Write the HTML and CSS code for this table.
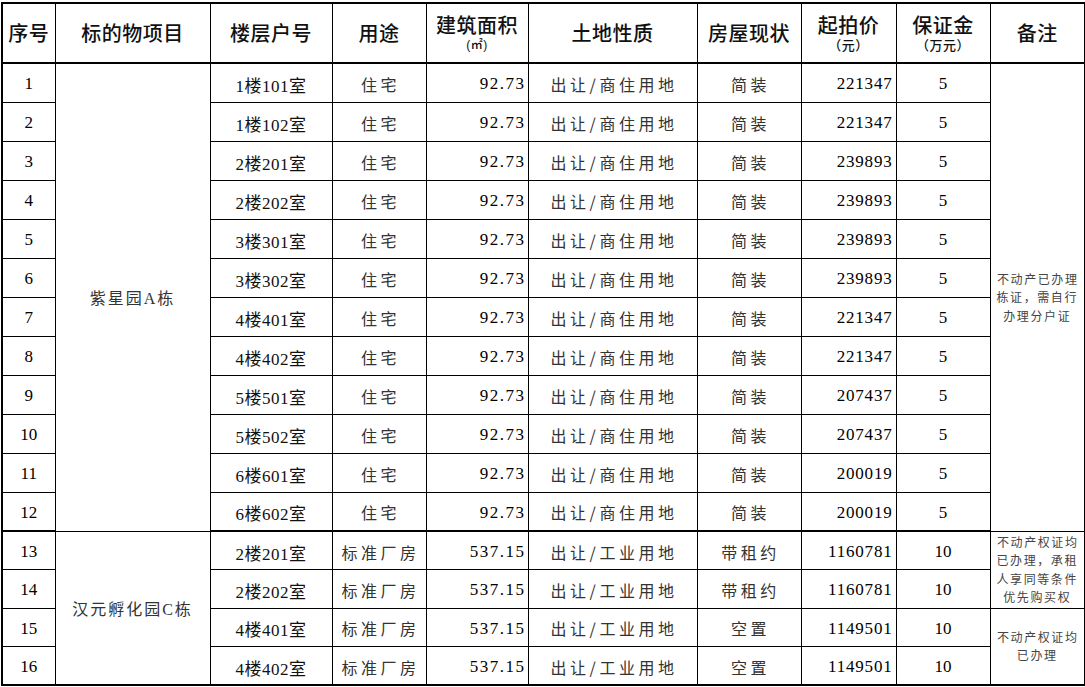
FILE: index.html
```html
<!DOCTYPE html>
<html lang="zh-CN">
<head>
<meta charset="utf-8">
<link rel="stylesheet" href="styles.css">
</head>
<body>
<table class="grid">
  <colgroup>
    <col class="c1"><col class="c2"><col class="c3"><col class="c4"><col class="c5">
    <col class="c6"><col class="c7"><col class="c8"><col class="c9"><col class="c10">
  </colgroup>
  <thead>
    <tr class="head">
      <th>序号</th>
      <th>标的物项目</th>
      <th>楼层户号</th>
      <th>用途</th>
      <th><span class="main">建筑面积</span><span class="sub sub-m">(㎡)</span></th>
      <th>土地性质</th>
      <th>房屋现状</th>
      <th><span class="main">起拍价</span><span class="sub">（元）</span></th>
      <th><span class="main">保证金</span><span class="sub">（万元）</span></th>
      <th>备注</th>
    </tr>
  </thead>
  <tbody>
    <tr><td class="num">1</td><td class="proj" rowspan="12">紫星园A栋</td><td class="room">1楼101室</td><td class="cjk">住宅</td><td class="area">92.73</td><td class="cjk">出让/商住用地</td><td class="cjk">简装</td><td class="price">221347</td><td class="num">5</td><td class="note" rowspan="12">不动产已办理<br>栋证，需自行<br>办理分户证</td></tr>
    <tr><td class="num">2</td><td class="room">1楼102室</td><td class="cjk">住宅</td><td class="area">92.73</td><td class="cjk">出让/商住用地</td><td class="cjk">简装</td><td class="price">221347</td><td class="num">5</td></tr>
    <tr><td class="num">3</td><td class="room">2楼201室</td><td class="cjk">住宅</td><td class="area">92.73</td><td class="cjk">出让/商住用地</td><td class="cjk">简装</td><td class="price">239893</td><td class="num">5</td></tr>
    <tr><td class="num">4</td><td class="room">2楼202室</td><td class="cjk">住宅</td><td class="area">92.73</td><td class="cjk">出让/商住用地</td><td class="cjk">简装</td><td class="price">239893</td><td class="num">5</td></tr>
    <tr><td class="num">5</td><td class="room">3楼301室</td><td class="cjk">住宅</td><td class="area">92.73</td><td class="cjk">出让/商住用地</td><td class="cjk">简装</td><td class="price">239893</td><td class="num">5</td></tr>
    <tr><td class="num">6</td><td class="room">3楼302室</td><td class="cjk">住宅</td><td class="area">92.73</td><td class="cjk">出让/商住用地</td><td class="cjk">简装</td><td class="price">239893</td><td class="num">5</td></tr>
    <tr><td class="num">7</td><td class="room">4楼401室</td><td class="cjk">住宅</td><td class="area">92.73</td><td class="cjk">出让/商住用地</td><td class="cjk">简装</td><td class="price">221347</td><td class="num">5</td></tr>
    <tr><td class="num">8</td><td class="room">4楼402室</td><td class="cjk">住宅</td><td class="area">92.73</td><td class="cjk">出让/商住用地</td><td class="cjk">简装</td><td class="price">221347</td><td class="num">5</td></tr>
    <tr><td class="num">9</td><td class="room">5楼501室</td><td class="cjk">住宅</td><td class="area">92.73</td><td class="cjk">出让/商住用地</td><td class="cjk">简装</td><td class="price">207437</td><td class="num">5</td></tr>
    <tr><td class="num">10</td><td class="room">5楼502室</td><td class="cjk">住宅</td><td class="area">92.73</td><td class="cjk">出让/商住用地</td><td class="cjk">简装</td><td class="price">207437</td><td class="num">5</td></tr>
    <tr><td class="num">11</td><td class="room">6楼601室</td><td class="cjk">住宅</td><td class="area">92.73</td><td class="cjk">出让/商住用地</td><td class="cjk">简装</td><td class="price">200019</td><td class="num">5</td></tr>
    <tr class="group-end"><td class="num">12</td><td class="room">6楼602室</td><td class="cjk">住宅</td><td class="area">92.73</td><td class="cjk">出让/商住用地</td><td class="cjk">简装</td><td class="price">200019</td><td class="num">5</td></tr>
    <tr class="r2"><td class="num">13</td><td class="proj" rowspan="4">汉元孵化园C栋</td><td class="room">2楼201室</td><td class="cjk">标准厂房</td><td class="area">537.15</td><td class="cjk">出让/工业用地</td><td class="cjk">带租约</td><td class="price">1160781</td><td class="num">10</td><td class="note" rowspan="2">不动产权证均<br>已办理，承租<br>人享同等条件<br>优先购买权</td></tr>
    <tr class="r2"><td class="num">14</td><td class="room">2楼202室</td><td class="cjk">标准厂房</td><td class="area">537.15</td><td class="cjk">出让/工业用地</td><td class="cjk">带租约</td><td class="price">1160781</td><td class="num">10</td></tr>
    <tr class="r2"><td class="num">15</td><td class="room">4楼401室</td><td class="cjk">标准厂房</td><td class="area">537.15</td><td class="cjk">出让/工业用地</td><td class="cjk">空置</td><td class="price">1149501</td><td class="num">10</td><td class="note" rowspan="2">不动产权证均<br>已办理</td></tr>
    <tr class="r2"><td class="num">16</td><td class="room">4楼402室</td><td class="cjk">标准厂房</td><td class="area">537.15</td><td class="cjk">出让/工业用地</td><td class="cjk">空置</td><td class="price">1149501</td><td class="num">10</td></tr>
  </tbody>
</table>
</body>
</html>
```

FILE: styles.css
```css
html, body {
  margin: 0;
  padding: 0;
  background: #ffffff;
}

body {
  padding: 2px 0 0 1px;
}

.grid {
  border-collapse: collapse;
  table-layout: fixed;
  width: 1083px;
  border: 2px solid #000;
  font-family: "Liberation Serif", "Noto Sans CJK SC", serif;
  color: #000;
}

.c1 { width: 53px; }
.c2 { width: 155px; }
.c3 { width: 122px; }
.c4 { width: 94px; }
.c5 { width: 102px; }
.c6 { width: 169px; }
.c7 { width: 104px; }
.c8 { width: 95px; }
.c9 { width: 94px; }
.c10 { width: 95px; }

.grid th,
.grid td {
  border: 1px solid #000;
  padding: 0;
  text-align: center;
  vertical-align: middle;
  white-space: nowrap;
  overflow: hidden;
}

.head {
  height: 60px;
}

.head th {
  border-bottom: 2px solid #000;
  font-family: "Noto Sans CJK SC", sans-serif;
  font-weight: 500;
  font-size: 20px;
  line-height: 24px;
  color: #111;
  letter-spacing: 0.5px;
}

.head .main,
.head .sub {
  display: block;
  font-family: "Liberation Sans", "Noto Sans CJK SC", sans-serif;
}

.head .main {
  line-height: 22px;
  padding-top: 1px;
}

.head .sub {
  font-size: 13px;
  line-height: 15px;
  margin-top: 1px;
}

.head .sub-m {
  font-size: 12px;
}

tbody tr {
  height: 39px;
}

tbody tr.r2 {
  height: 38.5px;
}

tr.group-end td {
  border-bottom: 2px solid #000;
}

td.num {
  font-size: 17px;
  padding-top: 3px;
}

td.room {
  font-size: 17px;
  letter-spacing: 0.5px;
  padding-top: 3px;
  color: #111;
}

td.cjk {
  font-family: "Noto Sans CJK SC", sans-serif;
  font-size: 16px;
  letter-spacing: 3.5px;
  color: #333;
  padding-top: 2px;
  text-indent: 3px;
}

td.area {
  font-size: 17px;
  letter-spacing: 1.5px;
  text-align: right;
  padding-right: 2px;
  padding-top: 3px;
}

td.price {
  font-size: 17px;
  letter-spacing: 0.8px;
  text-align: right;
  padding-right: 3px;
  padding-top: 3px;
}

td.proj {
  font-family: "Liberation Serif", "Noto Sans CJK SC", serif;
  font-size: 16px;
  letter-spacing: 2px;
  color: #333;
}

td.note {
  font-family: "Noto Sans CJK SC", sans-serif;
  font-size: 12px;
  letter-spacing: 1.6px;
  line-height: 18.5px;
  color: #444;
  text-indent: 1px;
}
```
